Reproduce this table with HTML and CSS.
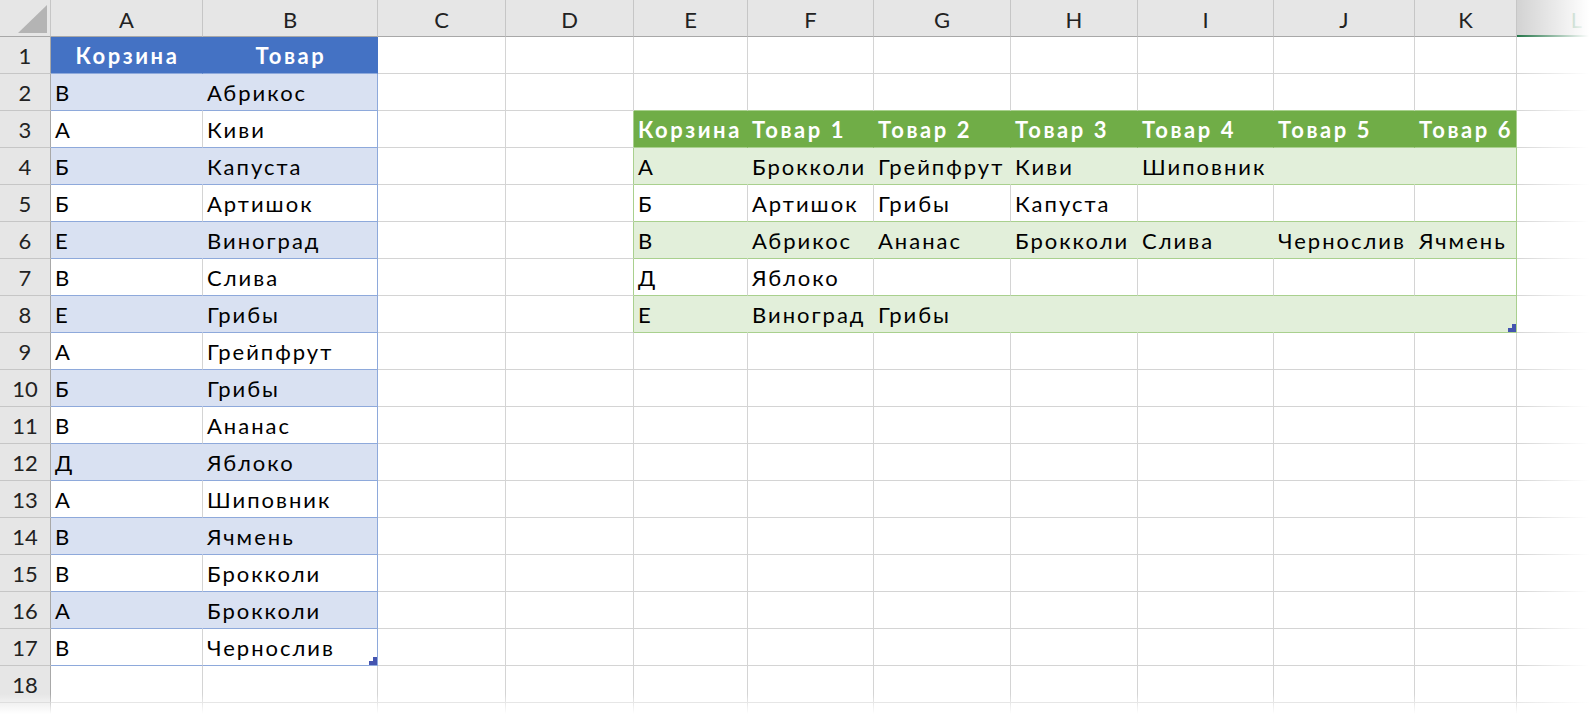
FILE: index.html
```html
<!DOCTYPE html>
<html lang="ru">
<head>
<meta charset="utf-8">
<title>Корзины</title>
<link rel="stylesheet" href="styles.css">
</head>
<body>
<div class="sheet">
  <div class="row">
    <div class="corner"><span class="tri"></span></div>
    <div class="ch">A</div><div class="ch">B</div><div class="ch">C</div><div class="ch">D</div><div class="ch">E</div><div class="ch">F</div><div class="ch">G</div><div class="ch">H</div><div class="ch">I</div><div class="ch">J</div><div class="ch">K</div><div class="ch act">L</div>
  </div>
  <div class="row">
    <div class="rh">1</div>
    <div class="c bh">Корзина</div><div class="c bh">Товар</div>
    <div class="c"></div><div class="c"></div><div class="c"></div><div class="c"></div><div class="c"></div><div class="c"></div><div class="c"></div><div class="c"></div><div class="c"></div><div class="c"></div>
  </div>
  <div class="row">
    <div class="rh">2</div>
    <div class="c bf">В</div><div class="c bf bend">Абрикос</div>
    <div class="c"></div><div class="c"></div>
    <div class="c gt"></div><div class="c gt"></div><div class="c gt"></div><div class="c gt"></div><div class="c gt"></div><div class="c gt"></div><div class="c gt"></div>
    <div class="c"></div>
  </div>
  <div class="row">
    <div class="rh">3</div>
    <div class="c bw">А</div><div class="c bw bend">Киви</div>
    <div class="c"></div><div class="c gl"></div>
    <div class="c gh">Корзина</div><div class="c gh">Товар 1</div><div class="c gh">Товар 2</div><div class="c gh">Товар 3</div><div class="c gh">Товар 4</div><div class="c gh">Товар 5</div><div class="c gh gend">Товар 6</div>
    <div class="c"></div>
  </div>
  <div class="row">
    <div class="rh">4</div>
    <div class="c bf">Б</div><div class="c bf bend">Капуста</div>
    <div class="c"></div><div class="c gl"></div>
    <div class="c gf">А</div><div class="c gf">Брокколи</div><div class="c gf">Грейпфрут</div><div class="c gf">Киви</div><div class="c gf">Шиповник</div><div class="c gf"></div><div class="c gf gend"></div>
    <div class="c"></div>
  </div>
  <div class="row">
    <div class="rh">5</div>
    <div class="c bw">Б</div><div class="c bw bend">Артишок</div>
    <div class="c"></div><div class="c gl"></div>
    <div class="c gw">Б</div><div class="c gw">Артишок</div><div class="c gw">Грибы</div><div class="c gw">Капуста</div><div class="c gw"></div><div class="c gw"></div><div class="c gw gend"></div>
    <div class="c"></div>
  </div>
  <div class="row">
    <div class="rh">6</div>
    <div class="c bf">Е</div><div class="c bf bend">Виноград</div>
    <div class="c"></div><div class="c gl"></div>
    <div class="c gf">В</div><div class="c gf">Абрикос</div><div class="c gf">Ананас</div><div class="c gf">Брокколи</div><div class="c gf">Слива</div><div class="c gf">Чернослив</div><div class="c gf gend">Ячмень</div>
    <div class="c"></div>
  </div>
  <div class="row">
    <div class="rh">7</div>
    <div class="c bw">В</div><div class="c bw bend">Слива</div>
    <div class="c"></div><div class="c gl"></div>
    <div class="c gw">Д</div><div class="c gw">Яблоко</div><div class="c gw"></div><div class="c gw"></div><div class="c gw"></div><div class="c gw"></div><div class="c gw gend"></div>
    <div class="c"></div>
  </div>
  <div class="row">
    <div class="rh">8</div>
    <div class="c bf">Е</div><div class="c bf bend">Грибы</div>
    <div class="c"></div><div class="c gl"></div>
    <div class="c gf">Е</div><div class="c gf">Виноград</div><div class="c gf">Грибы</div><div class="c gf"></div><div class="c gf"></div><div class="c gf"></div><div class="c gf gend handle"></div>
    <div class="c"></div>
  </div>
  <div class="row">
    <div class="rh">9</div>
    <div class="c bw">А</div><div class="c bw bend">Грейпфрут</div>
    <div class="c"></div><div class="c"></div><div class="c"></div><div class="c"></div><div class="c"></div><div class="c"></div><div class="c"></div><div class="c"></div><div class="c"></div><div class="c"></div>
  </div>
  <div class="row">
    <div class="rh">10</div>
    <div class="c bf">Б</div><div class="c bf bend">Грибы</div>
    <div class="c"></div><div class="c"></div><div class="c"></div><div class="c"></div><div class="c"></div><div class="c"></div><div class="c"></div><div class="c"></div><div class="c"></div><div class="c"></div>
  </div>
  <div class="row">
    <div class="rh">11</div>
    <div class="c bw">В</div><div class="c bw bend">Ананас</div>
    <div class="c"></div><div class="c"></div><div class="c"></div><div class="c"></div><div class="c"></div><div class="c"></div><div class="c"></div><div class="c"></div><div class="c"></div><div class="c"></div>
  </div>
  <div class="row">
    <div class="rh">12</div>
    <div class="c bf">Д</div><div class="c bf bend">Яблоко</div>
    <div class="c"></div><div class="c"></div><div class="c"></div><div class="c"></div><div class="c"></div><div class="c"></div><div class="c"></div><div class="c"></div><div class="c"></div><div class="c"></div>
  </div>
  <div class="row">
    <div class="rh">13</div>
    <div class="c bw">А</div><div class="c bw bend">Шиповник</div>
    <div class="c"></div><div class="c"></div><div class="c"></div><div class="c"></div><div class="c"></div><div class="c"></div><div class="c"></div><div class="c"></div><div class="c"></div><div class="c"></div>
  </div>
  <div class="row">
    <div class="rh">14</div>
    <div class="c bf">В</div><div class="c bf bend">Ячмень</div>
    <div class="c"></div><div class="c"></div><div class="c"></div><div class="c"></div><div class="c"></div><div class="c"></div><div class="c"></div><div class="c"></div><div class="c"></div><div class="c"></div>
  </div>
  <div class="row">
    <div class="rh">15</div>
    <div class="c bw">В</div><div class="c bw bend">Брокколи</div>
    <div class="c"></div><div class="c"></div><div class="c"></div><div class="c"></div><div class="c"></div><div class="c"></div><div class="c"></div><div class="c"></div><div class="c"></div><div class="c"></div>
  </div>
  <div class="row">
    <div class="rh">16</div>
    <div class="c bf">А</div><div class="c bf bend">Брокколи</div>
    <div class="c"></div><div class="c"></div><div class="c"></div><div class="c"></div><div class="c"></div><div class="c"></div><div class="c"></div><div class="c"></div><div class="c"></div><div class="c"></div>
  </div>
  <div class="row">
    <div class="rh">17</div>
    <div class="c bw">В</div><div class="c bw bend handle">Чернослив</div>
    <div class="c"></div><div class="c"></div><div class="c"></div><div class="c"></div><div class="c"></div><div class="c"></div><div class="c"></div><div class="c"></div><div class="c"></div><div class="c"></div>
  </div>
  <div class="row">
    <div class="rh">18</div>
    <div class="c"></div><div class="c"></div><div class="c"></div><div class="c"></div><div class="c"></div><div class="c"></div><div class="c"></div><div class="c"></div><div class="c"></div><div class="c"></div><div class="c"></div><div class="c"></div>
  </div>
  <div class="row">
    <div class="rh"></div>
    <div class="c"></div><div class="c"></div><div class="c"></div><div class="c"></div><div class="c"></div><div class="c"></div><div class="c"></div><div class="c"></div><div class="c"></div><div class="c"></div><div class="c"></div><div class="c"></div>
  </div>
</div>
<div class="fade-r"></div>
<div class="fade-b"></div>
</body>
</html>
```
FILE: styles.css
```css
* { box-sizing: border-box; margin: 0; padding: 0; }
html, body { width: 1589px; height: 714px; overflow: hidden; background: #fff; }
body {
  position: relative;
  font-family: Lato, "Noto Sans", "Open Sans", sans-serif;
  font-size: 22px;
  color: #000;
}
.sheet { display: flex; flex-direction: column; }
.row {
  display: grid;
  grid-template-columns: 51px 152px 175px 128px 128px 114px 126px 137px 127px 136px 141px 102px 120px;
  height: 37px;
  flex: none;
}
.c, .ch, .rh, .corner {
  display: flex;
  align-items: flex-end;
  white-space: nowrap;
  line-height: 24px;
  padding: 0 0 5px 4px;
  border-right: 1px solid #d4d4d4;
  border-bottom: 1px solid #d4d4d4;
}
.c { letter-spacing: 2px; }
.corner {
  background: #e6e6e6;
  justify-content: flex-end;
  padding: 0 3px 3px 0;
  border-right-color: #c6c6c6;
  border-bottom-color: #a8a8a8;
}
.tri {
  display: block;
  width: 29px;
  height: 28px;
  background: #b4b4b4;
  clip-path: polygon(100% 0, 100% 100%, 0 100%);
}
.ch {
  background: #e6e6e6;
  color: #222;
  justify-content: center;
  padding-left: 0;
  padding-bottom: 4px;
  border-right-color: #c6c6c6;
  border-bottom-color: #a8a8a8;
}
.ch.act {
  background: #d2d2d2;
  color: #217346;
  border-bottom: 2px solid #217346;
  padding-bottom: 3px;
}
.rh {
  background: #e6e6e6;
  color: #222;
  justify-content: center;
  padding-left: 0;
  border-right-color: #a8a8a8;
  border-bottom-color: #c6c6c6;
}

/* blue table */
.bh {
  background: #4472c4;
  color: #fff;
  font-weight: 700;
  letter-spacing: 2.6px;
  justify-content: center;
  padding-left: 2px;
  border-right-color: #4472c4;
  border-bottom-color: #8ea9db;
}
.bf { background: #d9e1f2; border-right-color: #d9e1f2; border-bottom-color: #8ea9db; }
.bw { border-bottom-color: #8ea9db; }
.bend { border-right-color: #8ea9db; }

/* green table */
.gt { border-bottom-color: #a9d08e; }
.gl { border-right-color: #a9d08e; }
.gh {
  background: #70ad47;
  color: #fff;
  font-weight: 700;
  letter-spacing: 2.6px;
  border-right-color: #70ad47;
  border-bottom-color: #a9d08e;
}
.gf { background: #e2efda; border-right-color: #e2efda; border-bottom-color: #a9d08e; }
.gw { border-bottom-color: #a9d08e; }
.gend { border-right-color: #a9d08e; }

.handle { position: relative; }
.handle::after {
  content: "";
  position: absolute;
  right: 0;
  bottom: 0;
  width: 8px;
  height: 8px;
  background: #4454b0;
  clip-path: polygon(50% 0, 100% 0, 100% 100%, 0 100%, 0 50%, 50% 50%);
}

.fade-r {
  position: absolute;
  top: 0;
  right: 0;
  width: 73px;
  height: 714px;
  background: linear-gradient(to right, rgba(255,255,255,0), #fff);
}
.fade-b {
  position: absolute;
  left: 0;
  right: 0;
  bottom: 0;
  height: 20px;
  background: linear-gradient(to bottom, rgba(255,255,255,0), #fff);
}
```
